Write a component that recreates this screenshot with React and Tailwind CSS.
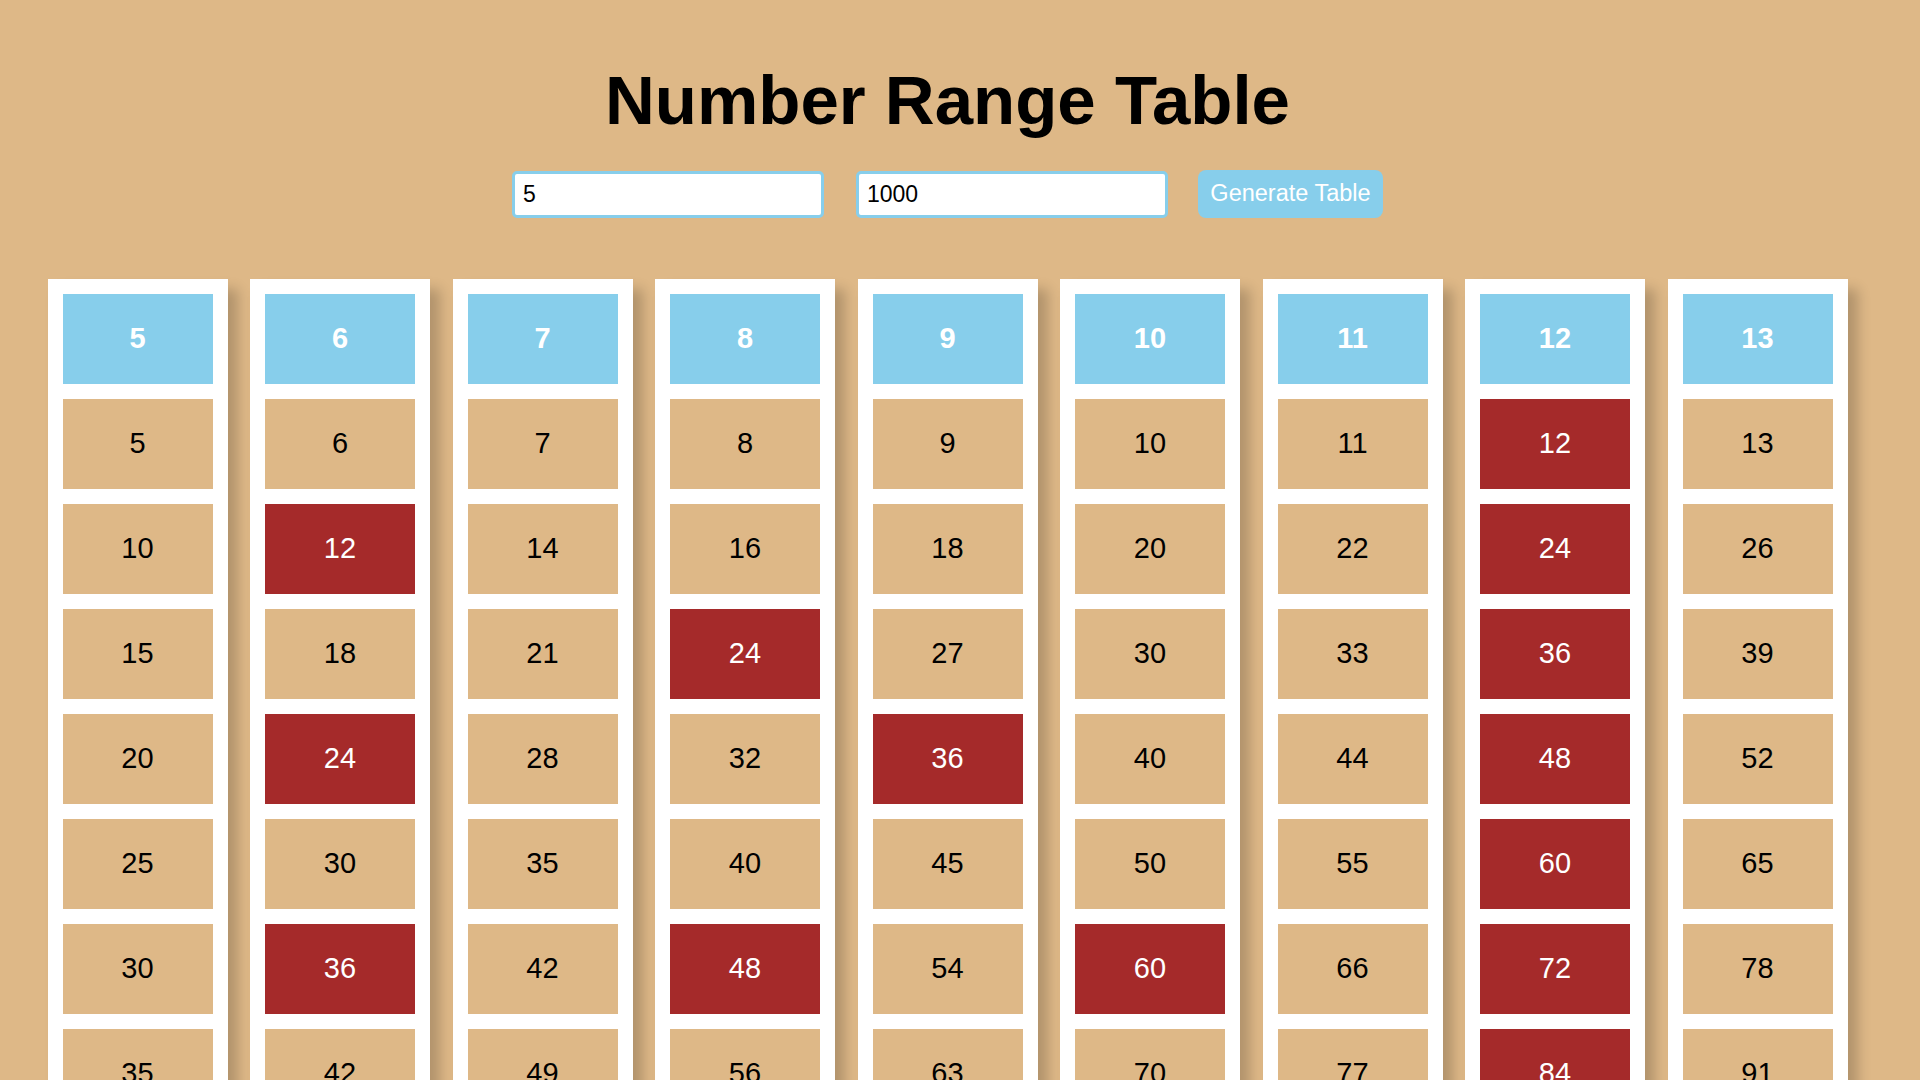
import { useState } from 'react'

function buildColumns(start, end) {
  const cols = []
  for (let n = start; n <= end; n++) {
    const values = []
    for (let k = 1; k <= 10; k++) values.push(n * k)
    cols.push({ n, values })
  }
  return cols
}

function App() {
  const [start, setStart] = useState('5')
  const [end, setEnd] = useState('1000')
  const [columns, setColumns] = useState(() => buildColumns(5, 1000))

  const generate = () => {
    const s = parseInt(start, 10)
    const e = parseInt(end, 10)
    if (!isNaN(s) && !isNaN(e) && s <= e) setColumns(buildColumns(s, e))
  }

  return (
    <div className="min-h-screen bg-[#deb887] font-['Liberation_Sans',Arial,sans-serif]">
      <div className="w-[1895px] pb-16">

        {/* Title */}
        <h1 className="pt-[66px] text-center text-[69px] leading-none font-bold text-black">
          Number Range Table
        </h1>

        {/* Controls */}
        <div className="mt-[35px] flex justify-center items-center">
          <input
            value={start}
            onChange={(e) => setStart(e.target.value)}
            className="w-[312px] h-[47px] border-[3px] border-[#87ceeb] rounded-[5px] bg-white px-[8px] text-[23px] text-black outline-none"
          />
          <input
            value={end}
            onChange={(e) => setEnd(e.target.value)}
            className="ml-[32px] w-[312px] h-[47px] border-[3px] border-[#87ceeb] rounded-[5px] bg-white px-[8px] text-[23px] text-black outline-none"
          />
          <button
            onClick={generate}
            className="ml-[30px] w-[185px] h-[48px] rounded-[8px] bg-[#87ceeb] text-white text-[23.5px]"
          >
            Generate Table
          </button>
        </div>

        {/* Columns */}
        <div className="mt-[61px] flex flex-wrap justify-center gap-x-[22.5px] gap-y-[30px]">
          {columns.map((col) => (
            <div key={col.n}
              className="w-[180px] bg-white p-[15px] flex flex-col gap-[15px] shadow-[10px_10px_12px_rgba(0,0,0,0.2)]">
              <div className="h-[90px] bg-[#87ceeb] flex items-center justify-center text-white font-bold text-[29px]">
                {col.n}
              </div>
              {col.values.map((v) => (
                <div key={v}
                  className={v % 12 === 0
                    ? 'h-[90px] bg-[#a52a2a] flex items-center justify-center text-white text-[29px]'
                    : 'h-[90px] bg-[#deb887] flex items-center justify-center text-black text-[29px]'}>
                  {v}
                </div>
              ))}
            </div>
          ))}
        </div>

      </div>
    </div>
  )
}

export default App
